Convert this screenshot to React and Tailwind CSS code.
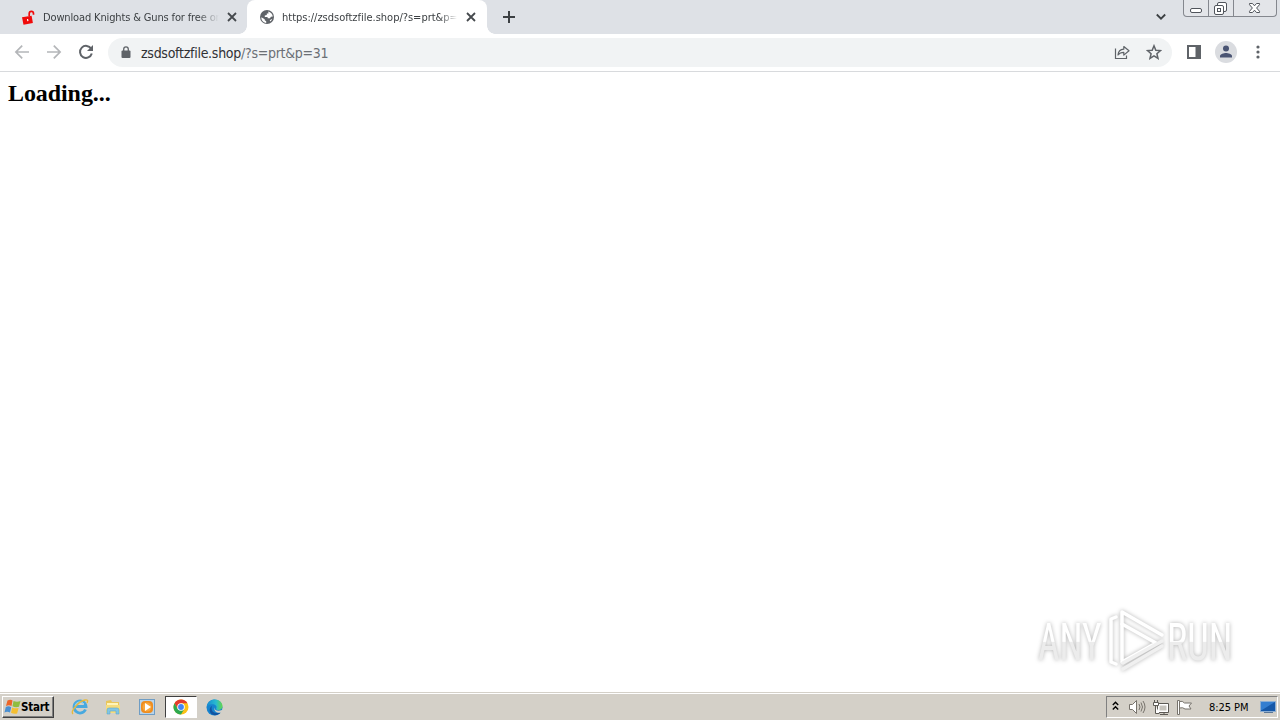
import React from 'react';

const CloseIcon = () => (
    <svg width="10" height="10" viewBox="0 0 10 10" fill="none" stroke="#45494d" strokeWidth="1.8">
        <path d="M1 1l8 8M9 1l-8 8" />
    </svg>
);

const TabStrip = () => (
    <div className="relative flex h-[34px] bg-[#dee1e6] text-[#3c4043]">
        <div className="flex w-[247px] items-center pl-[21px]">
            <svg width="14" height="15" viewBox="0 0 14 15">
                <path d="M1 7.2l9.6-1.5 1.3 7.3-9.4 1.7z" fill="#f00a0a" />
                <path d="M8.2 6V3.6C8.3.8 12.4.7 12.5 3.6v1.2" fill="none" stroke="#f00a0a" strokeWidth="1.7" />
                <path d="M6.5 9l.4 2.2" stroke="#fff" strokeWidth="1.2" />
            </svg>
            <div className="ml-2 w-[176px] whitespace-nowrap pt-[2px] text-[11px] tracking-[-0.14px] [mask-image:linear-gradient(to_right,black_88%,transparent)]">
                Download Knights &amp; Guns for free or
            </div>
            <div className="ml-2"><CloseIcon /></div>
        </div>
        <div className="flex w-[240px] items-center rounded-t-lg bg-white pl-[12px]">
            <svg width="16" height="16" viewBox="0 0 16 16">
                <circle cx="8" cy="8" r="7" fill="#5f6368" />
                <path d="M2.4 8.2l3.3 2.1v1l1.5 1v1.6C4.2 13.6 2 11.2 2.4 8.2zM9.2 2.4c2.5.5 4.3 2.4 4.6 5l-1.9.3-.9 1.6H8.6V8H5.8V6.5l2-.5V4.5h1.7zM13.3 9.8c-.4 1.2-1.1 2.1-1.9 2.8l-.7-1.3z" fill="#fff" />
            </svg>
            <div className="ml-[7px] w-[175px] whitespace-nowrap pt-[2px] text-[11px] tracking-[-0.01px] [mask-image:linear-gradient(to_right,black_90%,transparent)]">
                https://zsdsoftzfile.shop/?s=prt&amp;p=
            </div>
            <div className="ml-[9px]"><CloseIcon /></div>
        </div>
        {/* feet of the active tab */}
        <div className="absolute bottom-0 left-[239px] h-2 w-2 bg-[radial-gradient(circle_at_0_0,#dee1e6_7.5px,white_8px)]" />
        <div className="absolute bottom-0 left-[487px] h-2 w-2 bg-[radial-gradient(circle_at_100%_0,#dee1e6_7.5px,white_8px)]" />
        <svg className="ml-[15px] mt-[10px]" width="14" height="14" viewBox="0 0 14 14" stroke="#3c4043" strokeWidth="2">
            <path d="M7 1v12M1 7h12" />
        </svg>
        <div className="ml-auto flex">
            <svg className="mr-[16px] mt-[13px]" width="12" height="8" viewBox="0 0 12 8" fill="none" stroke="#3c4043" strokeWidth="1.8">
                <path d="M1.8 1.5L6 5.7l4.2-4.2" />
            </svg>
            <div className="mr-[3px] flex h-[17px] w-[94px] rounded-b border border-t-0 border-[#84878e] bg-[#e3e5e9] text-[#50545b]">
                <div className="w-[25px] border-r border-[#84878e]">
                    <svg width="24" height="16" fill="none" stroke="currentColor">
                        <rect x="6.5" y="8.5" width="11" height="4" rx="1.5" fill="#fff" />
                    </svg>
                </div>
                <div className="w-[25px] border-r border-[#84878e]">
                    <svg width="24" height="16" fill="none" stroke="currentColor">
                        <rect x="8.5" y="2.5" width="9" height="9" rx="1.5" fill="#fff" />
                        <rect x="5.5" y="5.5" width="9" height="9" rx="1.5" fill="#fff" />
                        <rect x="8.5" y="8.5" width="3" height="3" />
                    </svg>
                </div>
                <svg width="42" height="16" fill="#fff" stroke="currentColor">
                    <path d="M15.5 3.5h3l2 2.3 2-2.3h3v1.2L22.6 8l2.9 3.3v1.2h-3l-2-2.3-2 2.3h-3v-1.2L18.4 8l-2.9-3.3z" />
                </svg>
            </div>
        </div>
    </div>
);

const Toolbar = () => (
    <div className="flex h-[38px] items-center border-b border-[#d8dadd] bg-white pb-px pl-[14px] text-[#5f6368]">
        <svg width="16" height="16" viewBox="0 0 16 16" fill="none" stroke="#b4b6b9" strokeWidth="1.7">
            <path d="M15 8H2M8.2 1.7L1.9 8l6.3 6.3" />
        </svg>
        <svg className="ml-4" width="16" height="16" viewBox="0 0 16 16" fill="none" stroke="#b4b6b9" strokeWidth="1.7">
            <path d="M1 8h13M7.8 1.7L14.1 8l-6.3 6.3" />
        </svg>
        <svg className="ml-4" width="16" height="16" viewBox="0 0 16 16" fill="none">
            <path d="M13.2 4.8A6 6 0 1 0 13.8 9.5" stroke="#5f6368" strokeWidth="2" />
            <path d="M15 1v6H9z" fill="#5f6368" />
        </svg>
        <div className="ml-[14px] flex h-[29px] w-[1064px] items-center rounded-full bg-[#f1f3f4] pl-[13px] pr-[10px]">
            <svg width="10" height="13" viewBox="0 0 10 13" fill="none">
                <rect x="0.5" y="4.5" width="9" height="7.5" rx="1" fill="#5f6368" />
                <path d="M2.7 5V3.2a2.3 2.3 0 0 1 4.6 0V5" stroke="#5f6368" strokeWidth="1.3" />
            </svg>
            <span className="ml-[10px] whitespace-nowrap pt-[2px] text-[14px] tracking-[-0.27px] text-[#303134]">
                zsdsoftzfile.shop<span className="text-[#6b6f74]">/?s=prt&amp;p=31</span>
            </span>
            <svg className="ml-auto" width="16" height="16" viewBox="0 0 16 16" fill="none" stroke="#5f6368" strokeWidth="1.2">
                <path d="M1.5 4.5v10h11v-3" />
                <path d="M4 11c.3-3.8 2.4-5.6 5.8-5.8V2.5l5.2 4.3-5.2 4.3V8.4C7.2 8.4 5.4 9.2 4 11z" strokeLinejoin="round" />
            </svg>
            <svg className="ml-4" width="16" height="16" viewBox="0 0 16 16" fill="none" stroke="#5f6368" strokeWidth="1.5">
                <path d="M8 1.8l1.8 4.4 4.7.4-3.6 3.1 1.1 4.6L8 11.8l-4 2.5 1.1-4.6L1.5 6.6l4.7-.4z" />
            </svg>
        </div>
        <svg className="ml-[15px]" width="14" height="14" viewBox="0 0 14 14">
            <path d="M0 0h14v14H0zM2 2v10h6.5V2z" fill="#5f6368" fillRule="evenodd" />
        </svg>
        <div className="ml-[14px] h-[22px] w-[22px] overflow-hidden rounded-full bg-[#dadce0]">
            <svg width="22" height="22" viewBox="0 0 22 22" fill="#4a5473">
                <circle cx="11" cy="7.5" r="3" />
                <path d="M5 16.5v-1.6c0-2 4-3 6-3s6 1 6 3v1.6z" />
            </svg>
        </div>
        <svg className="ml-[19px]" width="4" height="14" viewBox="0 0 4 14" fill="#5f6368">
            <circle cx="2" cy="2" r="1.6" />
            <circle cx="2" cy="7" r="1.6" />
            <circle cx="2" cy="12" r="1.6" />
        </svg>
    </div>
);

const Watermark = () => (
    <svg
        className="absolute bottom-[12px] right-[30px] [filter:drop-shadow(0_0_2px_rgba(0,0,0,0.3))]"
        width="230"
        height="80"
        viewBox="0 0 230 80"
        fill="none"
    >
        <defs>
            <linearGradient id="fade" x1="0" y1="-37" x2="0" y2="2" gradientUnits="userSpaceOnUse">
                <stop offset="0.47" stopColor="#fff" />
                <stop offset="0.5" stopColor="#ececec" />
            </linearGradient>
        </defs>
        <g fill="url(#fade)" fontFamily="Roboto, sans-serif" fontSize="51">
            <text transform="translate(18 60) scale(0.73 1)">ANY</text>
            <text transform="translate(147 60) scale(0.75 1)">RUN</text>
        </g>
        <g strokeWidth="3.5" strokeLinejoin="round" strokeLinecap="round">
            <path d="M96 17l-5 2v43l5 2" stroke="#fff" />
            <path d="M102 60V12l40 23" stroke="#fff" />
            <path d="M102 24l34 19-34 19" stroke="#fff" />
            <path d="M142 41l-39 22M103 69l39-23" stroke="#f0f0f0" />
        </g>
    </svg>
);

const QuickLaunch = () => (
    <>
        <svg width="18" height="18" viewBox="0 0 18 18" fill="none">
            <path d="M14.5 11.5A6 6 0 1 1 15 8.5H5" stroke="#48a9df" strokeWidth="2.8" />
            <path d="M4 8a5 5 0 0 1 9-2" stroke="#9bdcf8" strokeWidth="1" />
            <path d="M2 16C-1 13 8 3 14 2c3-.5 3 1 2 3" stroke="#e7b93c" strokeWidth="1.4" />
        </svg>
        <svg className="ml-[15px]" width="18" height="18" viewBox="0 0 18 18">
            <path d="M2 3l5-1 1 2h7v11H2z" fill="#e9c65b" />
            <path d="M3 5h11v7H3z" fill="#fff4b9" />
            <path d="M2 7h14v8H2z" fill="#f6dc7d" />
            <path d="M3 16v-4q0-2 2-2h8q2 0 2 2v4h-3v-3H6v3z" fill="#82c5e4" stroke="#5ba8cf" strokeWidth=".6" />
        </svg>
        <svg className="ml-4" width="18" height="18" viewBox="0 0 18 18">
            <rect x="1.5" y="1.5" width="15" height="15" fill="#b9d4ea" stroke="#6f9dc4" />
            <rect x="3" y="3" width="12" height="12" rx="4" fill="#ee8d20" />
            <circle cx="9" cy="9" r="4.5" fill="#f9a73c" />
            <path d="M7 5l6 4-6 4z" fill="#fff" />
        </svg>
        <div className="ml-[9px] flex h-[22px] w-[32px] items-center justify-center border border-b-white border-l-[#404040] border-r-white border-t-[#404040] bg-white">
            <svg width="16" height="16" viewBox="0 0 16 16">
                <circle cx="8" cy="8" r="7.5" fill="#fbc116" />
                <path d="M1.5 4.25A7.5 7.5 0 0 1 14.5 4.25H8L4.75 9.9z" fill="#e33b2e" />
                <path d="M1.5 4.25A7.5 7.5 0 0 0 8 15.5l3.25-5.6H4.75z" fill="#2da94f" />
                <circle cx="8" cy="8" r="3.8" fill="#fff" />
                <circle cx="8" cy="8" r="2.9" fill="#4285f4" />
            </svg>
        </div>
        <svg className="ml-[9px]" width="17" height="17" viewBox="0 0 17 17">
            <defs>
                <linearGradient id="edge" x1="0" y1="0" x2="1" y2="0">
                    <stop offset="0" stopColor="#168bd2" />
                    <stop offset="0.6" stopColor="#29bbcf" />
                    <stop offset="1" stopColor="#65d64a" />
                </linearGradient>
            </defs>
            <circle cx="8.5" cy="8.5" r="8" fill="#1683ce" />
            <path d="M.6 8C1.5 3 5 .5 8.8.5c4.5 0 7.7 3.2 7.7 6.6 0 2.5-1.8 4-4 4-1.8 0-3-.7-2.2-1.8C11.5 7 9 5.2 6 5.3 3 5.4 1 7 .6 8z" fill="url(#edge)" />
            <path d="M5.5 9c0 4 3.5 6 9 4.5-3 3.5-8 3.5-10.2 0C3 11 4 8 6 7z" fill="#1254a1" />
            <path d="M9 8.5c-1 3 3 4.3 7 2.5l1 1.2-2 1.5C11 14.5 7 12 9 8.5z" fill="#d4d0c8" />
        </svg>
    </>
);

const Taskbar = () => (
    <div className="flex h-[28px] items-center border-t border-[#d4d0c8] bg-[#d4d0c8] px-[2px] shadow-[inset_0_1px_0_#fff]">
        <div className="mt-px flex h-[22px] w-[52px] items-center border border-b-[#404040] border-l-white border-r-[#404040] border-t-white pl-px shadow-[inset_-1px_-1px_0_#808080]">
            <svg width="17" height="16" viewBox="0 0 16 16">
                <path d="M3 1.5Q6 0 8 1.5L7 7Q4.5 5.7 1.5 7z" fill="#ed6528" />
                <path d="M9 2q3.5 1.5 7 0l-1.5 5.8Q11 9 8 7.3z" fill="#8fbd40" />
                <path d="M1.3 8q2.8-1.4 5.4.2l-1.2 5.3q-2.7-1.5-5.5-.1z" fill="#4a8fd1" />
                <path d="M7.7 8.5q3 1.5 6.4.4l-1.5 5.5q-3 1-6.1-.7z" fill="#f5bf31" />
            </svg>
            <span className="whitespace-nowrap pt-px text-[11.5px] font-bold tracking-[-0.25px]">Start</span>
        </div>
        <div className="ml-[17px] mt-px flex items-center">
            <QuickLaunch />
        </div>
        <div className="ml-auto mt-px flex h-[22px] w-[172px] items-center border border-b-white border-l-[#808080] border-r-white border-t-[#808080] pl-[5px]">
            <svg className="mb-[2px]" width="7" height="10" viewBox="0 0 7 10" fill="none" stroke="#000" strokeWidth="1.4">
                <path d="M.8 4l2.7-2.7L6.2 4M.8 8.5l2.7-2.7 2.7 2.7" />
            </svg>
            <svg className="ml-[9px]" width="18" height="16" viewBox="0 0 18 16" fill="none" stroke="#77736c">
                <path d="M1.5 5.5h3l4-4v13l-4-4h-3z" fill="#fff" />
                <path d="M11 5q2 3 0 6M13 3.5q3 4.5 0 9M15 2q4 6 0 12" />
            </svg>
            <svg className="ml-[6px]" width="18" height="17" viewBox="0 0 18 17" fill="#fff" stroke="#5d5a55">
                <path d="M5.5 4.5h11v9h-11zM8 15.5h8M12 13.5v2" />
                <path d="M7.5 6.5h7v5h-7z" fill="#c6c3bc" stroke="none" />
                <path d="M2.5 1v2M5.5 1v2M1.5 3.5h5v3h-5zM3.5 6.5v8h4" />
            </svg>
            <svg className="ml-[6px]" width="18" height="17" viewBox="0 0 18 17" fill="#fff" stroke="#77736c">
                <path d="M1.5 1.5v14h2v-14z" />
                <path d="M3.5 2.5q3-1 5 1.5h7l-2.5 3 2 3H9q-2-2-5.500-1z" />
            </svg>
            <span className="ml-[15px] w-[42px] whitespace-nowrap pt-[2px] text-[11px] tracking-[-0.05px]">8:25 PM</span>
            <svg className="ml-[9px]" width="16" height="14" viewBox="0 0 16 14">
                <path d="M.5 1.5h15v10H.5z" fill="#1658a8" stroke="#8caed3" />
                <path d="M1 2h14L2 10H1z" fill="#347ed0" />
                <path d="M4 12h9v1H4z" fill="#5b7797" />
            </svg>
        </div>
    </div>
);

const App = () => {
    return (
        <div className="flex h-[720px] w-[1280px] flex-col overflow-hidden bg-white font-['DejaVu_Sans_Condensed','DejaVu_Sans',sans-serif] text-black [font-stretch:condensed]">
            <TabStrip />
            <Toolbar />
            <div className="relative flex-1 bg-white pl-[8px] pt-[7px]">
                <h2 className="font-['Liberation_Serif',serif] text-[24px] font-bold leading-[28px] tracking-[-0.08px]">Loading...</h2>
                <Watermark />
            </div>
            <Taskbar />
        </div>
    );
};

export default App;
